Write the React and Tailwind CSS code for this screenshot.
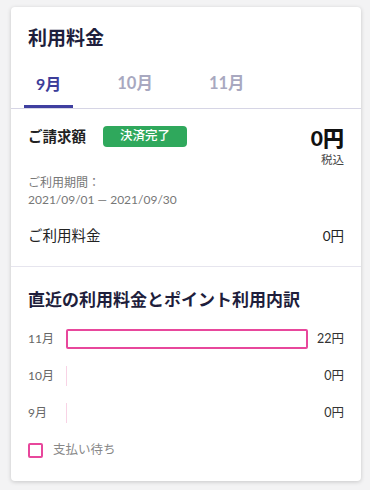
export default function App() {
  const rows = [
    { m: "11月", v: "22円", w: 100 },
    { m: "10月", v: "0円", w: 0 },
    { m: "9月", v: "0円", w: 0 },
  ];
  return (
    <div
      className="min-h-[490px] w-[370px] bg-[#f3f3f4] pt-[7px] pl-[11px]"
      style={{ fontFamily: "Lato, 'Noto Sans CJK JP', sans-serif" }}
    >
      <div className="w-[350px] h-[474px] bg-white rounded-[4px] shadow-[0_1px_4px_rgba(0,0,0,0.18)] flex flex-col">
        <div className="pt-[18px] pb-[9px] pl-[17px] text-[19px] leading-[26px] font-bold text-[#1e1e3c]">
          利用料金
        </div>
        <div className="flex gap-[32px] pl-[13px] border-b border-[#d6d5e5]">
          <div className="h-[48px] px-3 flex items-center justify-center border-b-[3px] border-[#3f3fa0] text-[16px] font-bold text-[#3d3d99] pt-[2px]">
            9月
          </div>
          <div className="h-[48px] px-3 flex items-center justify-center border-b-[3px] border-transparent text-[16.5px] font-bold text-[#a8a8c0] pt-[2px]">
            10月
          </div>
          <div className="h-[48px] px-3 flex items-center justify-center border-b-[3px] border-transparent text-[16.5px] font-bold text-[#a8a8c0] pt-[2px]">
            11月
          </div>
        </div>
        <div className="px-[17px] pt-[17px] pb-[20px] border-b border-[#e6e5ee]">
          <div className="flex justify-between items-start">
            <div className="flex items-center gap-[17px] h-[21px]">
              <span className="text-[14.5px] font-bold text-[#222]">ご請求額</span>
              <span className="h-[21px] w-[84px] rounded-[4px] bg-[#2fa85c] text-white text-[12.5px] font-medium flex items-center justify-center">
                決済完了
              </span>
            </div>
            <div className="flex flex-col items-end">
              <div className="text-[21px] leading-[24px] font-black text-[#111]">0円</div>
              <div className="text-[11.5px] leading-[16px] mt-[2px] text-[#444]">税込</div>
            </div>
          </div>
          <div className="mt-[6px] text-[12px] leading-[17px] text-[#777]">
            <div>ご利用期間：</div>
            <div>2021/09/01 — 2021/09/30</div>
          </div>
          <div className="mt-[18px] flex justify-between items-center text-[14.5px] leading-[20px] text-[#222]">
            <span>ご利用料金</span>
            <span className="text-[13.5px]">0円</span>
          </div>
        </div>
        <div className="px-[17px] pt-[21px]">
          <div className="text-[17px] leading-[24px] font-bold text-[#1e1e3c]">
            直近の利用料金とポイント利用内訳
          </div>
          <div className="mt-[17px] flex flex-col gap-[17px]">
            {rows.map((r) => (
              <div key={r.m} className="flex items-center h-5">
                <span className="w-[38px] text-[12px] text-[#666]">{r.m}</span>
                <div className="flex-1 h-5 flex">
                  {r.w > 0 ? (
                    <div
                      className="h-5 border-2 border-[#e8479c] rounded-[2px] bg-white"
                      style={{ width: `${r.w}%` }}
                    />
                  ) : (
                    <div className="h-5 w-0 border-l border-[#f8d3e5]" />
                  )}
                </div>
                <span className="w-[36px] text-right text-[12.5px] text-[#333]">{r.v}</span>
              </div>
            ))}
          </div>
          <div className="mt-[18px] flex items-center gap-[10px]">
            <div className="w-[15px] h-[15px] border-2 border-[#e8479c] rounded-[2px]" />
            <span className="text-[12.5px] text-[#888]">支払い待ち</span>
          </div>
        </div>
      </div>
    </div>
  );
}
